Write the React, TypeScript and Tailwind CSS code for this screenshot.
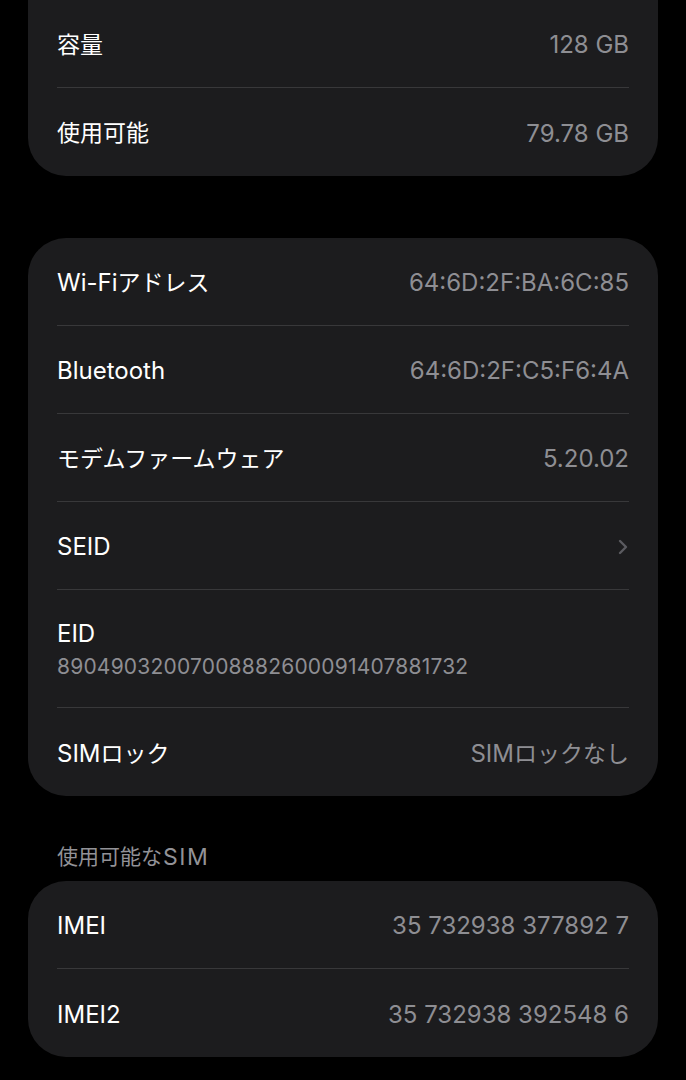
import React from 'react';

/* iOS "情報" settings page, dark mode — cropped mid-scroll. */

type Row = { label: string; value?: string; chevron?: boolean; sub?: string };

const FONT = '"Inter", "Noto Sans CJK JP", sans-serif';

const storage: Row[] = [
  { label: '容量', value: '128 GB' },
  { label: '使用可能', value: '79.78 GB' },
];

const network: Row[] = [
  { label: 'Wi-Fiアドレス', value: '64:6D:2F:BA:6C:85' },
  { label: 'Bluetooth', value: '64:6D:2F:C5:F6:4A' },
  { label: 'モデムファームウェア', value: '5.20.02' },
  { label: 'SEID', chevron: true },
  { label: 'EID', sub: '89049032007008882600091407881732' },
  { label: 'SIMロック', value: 'SIMロックなし' },
];

const sims: Row[] = [
  { label: 'IMEI', value: '35 732938 377892 7' },
  { label: 'IMEI2', value: '35 732938 392548 6' },
];

// SF Pro runs wider than Inter, so latin runs get a bigger size than the kana/kanji runs.
function Mixed({ text }: { text: string }) {
  const parts = text.match(/[\u3000-\u9fff]+|[^\u3000-\u9fff]+/g) ?? [];
  return (
    <>
      {parts.map((p, i) =>
        /[\u3000-\u9fff]/.test(p) ? (
          <span key={i} className="text-[23px]">{p}</span>
        ) : (
          <span key={i} className="text-[24px]">{p}</span>
        ),
      )}
    </>
  );
}

function Chevron() {
  return (
    <svg width="10" height="16" viewBox="0 0 10 16" fill="none">
      <path d="M2 2l6 6-6 6" stroke="#5b5b60" strokeWidth="2.4" strokeLinecap="round" strokeLinejoin="round" />
    </svg>
  );
}

function Cell({ row, last }: { row: Row; last: boolean }) {
  const sep = last ? '' : 'border-b border-[#38383a]';
  if (row.sub) {
    return (
      <div className={`flex h-[118px] flex-col justify-start pt-[30px] ${sep}`}>
        <span className="text-[24px] leading-[28px] text-white">{row.label}</span>
        <span className="mt-[6px] text-[21px] leading-[26px] tracking-[0.2px] text-[#8e8e93]">{row.sub}</span>
      </div>
    );
  }
  return (
    <div className={`flex h-[88px] items-center justify-between pt-[3px] ${sep}`}>
      <span className="text-white">
        <Mixed text={row.label} />
      </span>
      {row.value && (
        <span className="text-[#8e8e93]">
          <Mixed text={row.value} />
        </span>
      )}
      {row.chevron && (
        <span className="mr-[1px]">
          <Chevron />
        </span>
      )}
    </div>
  );
}

function Group({ rows, className = '' }: { rows: Row[]; className?: string }) {
  return (
    <div className={`mx-[28px] bg-[#1c1c1e] px-[29px] ${className}`}>
      {rows.map((r, i) => (
        <Cell key={r.label} row={r} last={i === rows.length - 1} />
      ))}
    </div>
  );
}

export default function App() {
  return (
    <div className="h-[1080px] w-[686px] overflow-hidden bg-black" style={{ fontFamily: FONT }}>
      <Group rows={storage} className="rounded-b-[38px]" />
      <Group rows={network} className="mt-[62px] rounded-[38px]" />
      <div className="mt-[46px] flex h-[30px] items-center px-[57px] text-[#929297]">
        <span className="text-[21px] leading-[30px]">使用可能な</span>
        <span className="ml-[1px] text-[23px] leading-[30px] tracking-[1.5px]">SIM</span>
      </div>
      <Group rows={sims} className="mt-[9px] rounded-[38px]" />
    </div>
  );
}
